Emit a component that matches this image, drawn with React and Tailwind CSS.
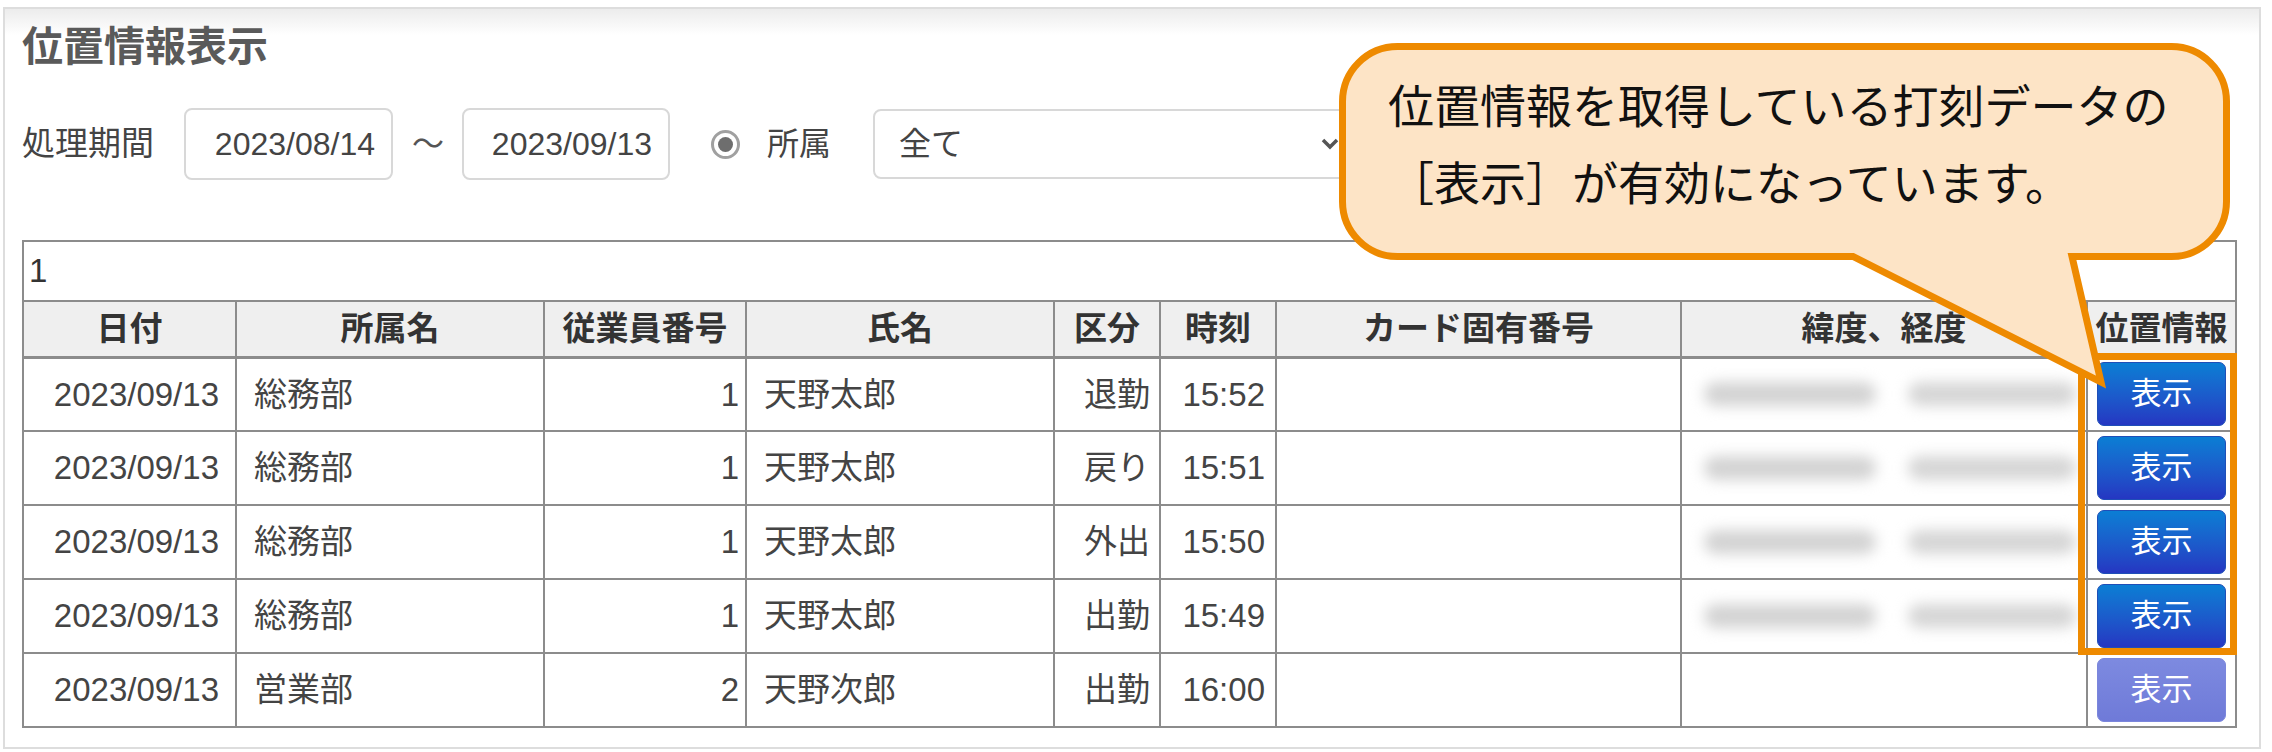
import React from 'react';

const rows = [
  { date: '2023/09/13', dept: '総務部', no: '1', name: '天野太郎', kind: '退勤', time: '15:52', geo: true },
  { date: '2023/09/13', dept: '総務部', no: '1', name: '天野太郎', kind: '戻り', time: '15:51', geo: true },
  { date: '2023/09/13', dept: '総務部', no: '1', name: '天野太郎', kind: '外出', time: '15:50', geo: true },
  { date: '2023/09/13', dept: '総務部', no: '1', name: '天野太郎', kind: '出勤', time: '15:49', geo: true },
  { date: '2023/09/13', dept: '営業部', no: '2', name: '天野次郎', kind: '出勤', time: '16:00', geo: false },
];

const headers = ['日付', '所属名', '従業員番号', '氏名', '区分', '時刻', 'カード固有番号', '緯度、経度', '位置情報'];

const cell = 'border-2 border-[#8c8c8c]';

// the balloon is one path: rounded box + tail pointing at the first button
const balloon =
  'M 1397.5 46.5 H 2171.5 A 55 55 0 0 1 2226.5 101.5 V 201.5 A 55 55 0 0 1 2171.5 256.5 H 2072 L 2101 382 L 1853 256.5 H 1397.5 A 55 55 0 0 1 1342.5 201.5 V 101.5 A 55 55 0 0 1 1397.5 46.5 Z';

const DateBox = ({ value, className }) => (
  <div
    className={`h-[72px] border-2 border-[#d8d8d8] rounded-[8px] flex items-center justify-end pr-[16px] bg-white ${className}`}
  >
    {value}
  </div>
);

const App = () => {
  return (
    <div className="relative w-[2272px] h-[752px] bg-white pt-[7px] pl-[3px] font-['Liberation_Sans','Noto_Sans_CJK_JP',sans-serif] text-[#444]">
      <div className="w-[2258px] h-[742px] border-2 border-[#dddddd] pl-[17px] pt-[18px] bg-[linear-gradient(to_bottom,#ececec,#ffffff_26px)]">
        {/* Title */}
        <div className="h-[41px] text-[41px] leading-[41px] font-bold text-[#5a5a5a]">位置情報表示</div>

        {/* Filters */}
        <div className="mt-[40px] h-[72px] flex items-center text-[32px]">
          <span className="text-[33px]">処理期間</span>
          <DateBox value="2023/08/14" className="ml-[30px] w-[209px]" />
          <span className="ml-[19px] text-[#555]">～</span>
          <DateBox value="2023/09/13" className="ml-[18px] w-[208px]" />
          <div className="ml-[41px] w-[29px] h-[29px] rounded-full border-[3px] border-[#a0a0a0] bg-white flex items-center justify-center">
            <div className="w-[15px] h-[15px] rounded-full bg-[#6e6e6e]" />
          </div>
          <span className="ml-[27px]">所属</span>
          <div className="ml-[42px] w-[484px] h-[70px] border-2 border-[#d8d8d8] rounded-[8px] flex items-center justify-between pl-[24px] pr-[16px]">
            <span>全て</span>
            <svg width="18" height="12" viewBox="0 0 18 12" fill="none">
              <path d="M2 2 L9 9 L16 2" stroke="#555" strokeWidth="3.5" />
            </svg>
          </div>
        </div>

        {/* Table */}
        <table className="mt-[60px] border-collapse table-fixed w-[2213px] text-[33px] text-[#444]">
          <colgroup>
            <col className="w-[213px]" />
            <col className="w-[308px]" />
            <col className="w-[202px]" />
            <col className="w-[308px]" />
            <col className="w-[106px]" />
            <col className="w-[116px]" />
            <col className="w-[405px]" />
            <col className="w-[406px]" />
            <col className="w-[149px]" />
          </colgroup>
          <tbody>
            <tr className="h-[60px]">
              <td colSpan={9} className={`${cell} pl-[5px] text-left text-[#333]`}>1</td>
            </tr>
            <tr className="h-[56px] bg-[#efefef]">
              {headers.map((h) => (
                <th key={h} className={`${cell} border-b-[3px] text-center font-bold text-[#333] whitespace-nowrap`}>
                  {h}
                </th>
              ))}
            </tr>
            {rows.map((r, i) => (
              <tr key={i} className="h-[74px]">
                <td className={`${cell} text-right pr-[16px]`}>{r.date}</td>
                <td className={`${cell} text-left pl-[17px]`}>{r.dept}</td>
                <td className={`${cell} text-right pr-[6px]`}>{r.no}</td>
                <td className={`${cell} text-left pl-[17px]`}>{r.name}</td>
                <td className={`${cell} text-right pr-[9px]`}>{r.kind}</td>
                <td className={`${cell} text-right pr-[10px]`}>{r.time}</td>
                <td className={cell}></td>
                <td className={cell}>
                  {r.geo && (
                    <div className="flex items-center">
                      <div className="ml-[22px] w-[172px] h-[24px] rounded-full bg-[#d3d3d3] blur-[7px]" />
                      <div className="ml-[32px] w-[168px] h-[24px] rounded-full bg-[#d6d6d6] blur-[7px]" />
                    </div>
                  )}
                </td>
                <td className={`${cell} text-center`}>
                  <button
                    disabled={!r.geo}
                    className={`inline-flex items-center justify-center w-[129px] h-[64px] rounded-[7px] text-white text-[31px] align-middle ${
                      r.geo
                        ? 'bg-linear-to-b from-[#0a7ed4] to-[#2536c2] border border-[#1f4fb8]'
                        : 'bg-linear-to-b from-[#7d8ae0] to-[#6f7ad8] border border-[#7b86dc]'
                    }`}
                  >
                    表示
                  </button>
                </td>
              </tr>
            ))}
          </tbody>
        </table>
      </div>

      {/* Highlight around the enabled buttons */}
      <div className="absolute left-[2078px] top-[353px] w-[159px] h-[302px] border-[7px] border-[#ee8a00]" />

      {/* Balloon */}
      <svg className="absolute left-0 top-0 pointer-events-none" width="2272" height="752" viewBox="0 0 2272 752">
        <path d={balloon} fill="#fde4c6" stroke="#ee8a00" strokeWidth="7" strokeLinejoin="miter" />
      </svg>
      <div className="absolute left-[1388px] top-[65px] text-[46px] leading-[77px] text-[#111] font-['Noto_Sans_CJK_JP',sans-serif] whitespace-nowrap">
        <div>位置情報を取得している打刻データの</div>
        <div>［表示］が有効になっています。</div>
      </div>
    </div>
  );
};

export default App;
